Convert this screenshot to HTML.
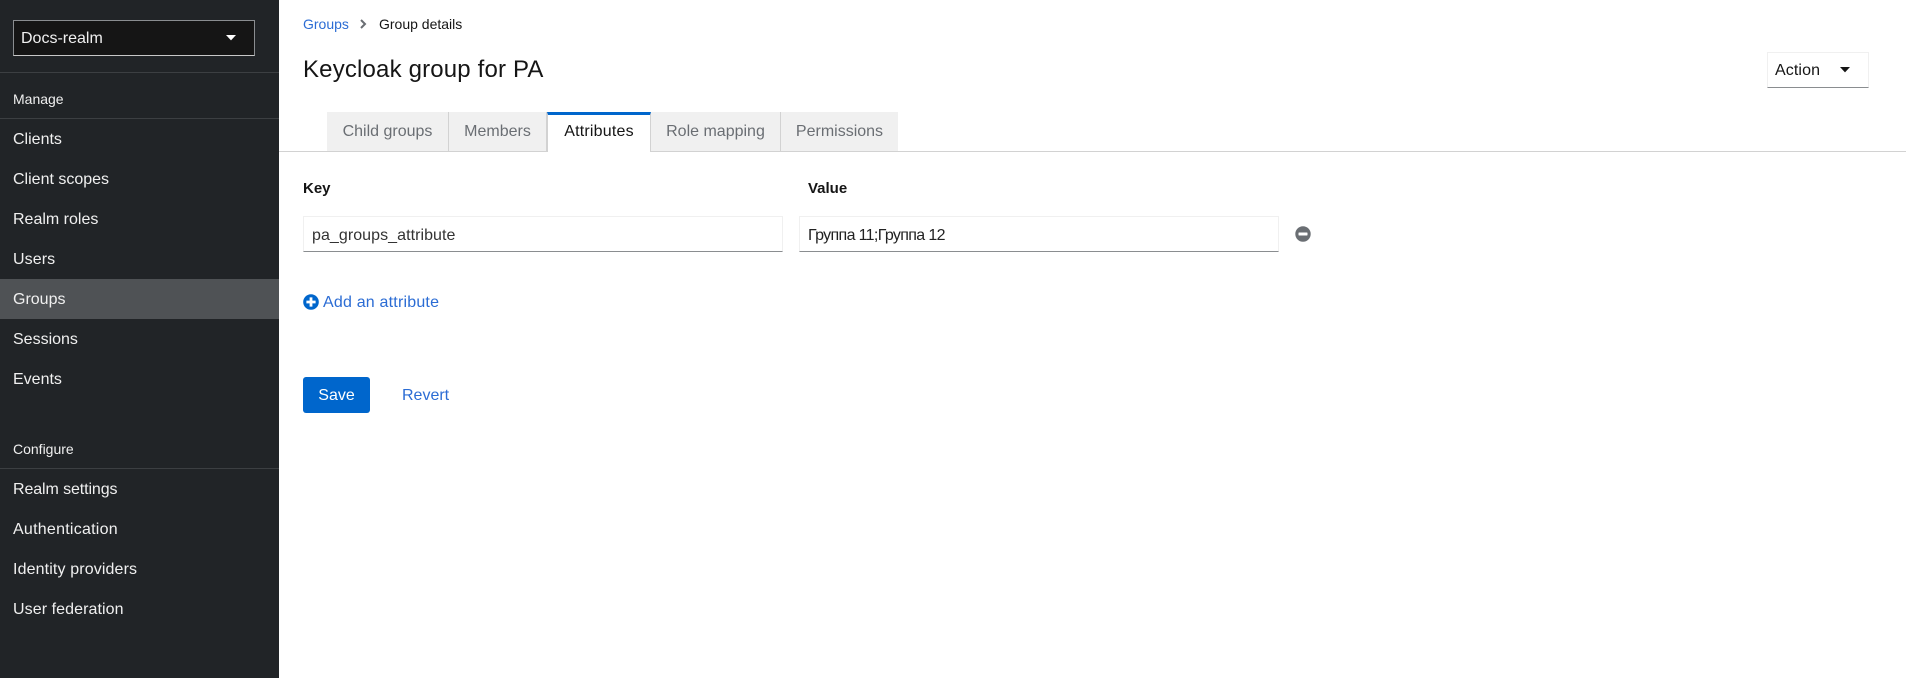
<!DOCTYPE html>
<html lang="en"><head><meta charset="utf-8"><title>Keycloak group for PA</title>
<style>
html,body{margin:0;padding:0;width:1906px;height:678px;overflow:hidden;background:#fff}
body{position:relative;font-family:"Liberation Sans","Noto Sans CJK SC",sans-serif;font-size:16px;color:#151515}
.a,.t{position:absolute;box-sizing:border-box}
.t{white-space:nowrap;line-height:24px;height:24px}
.nav{left:13px;color:#f0f0f0}
.line{position:absolute;left:0;width:279px;height:1px;background:#3c3f42}
.tab{position:absolute;top:112px;height:39px;background:#f0f0f0;color:#6a6e73;border-right:1px solid #d2d2d2;line-height:40px;text-align:center;white-space:nowrap;box-sizing:border-box}
.input{position:absolute;top:216px;height:36px;width:480px;box-sizing:border-box;border:1px solid #f0f0f0;border-bottom:1px solid #8a8d90;line-height:36px;padding-left:8px;white-space:nowrap}
</style></head><body>
<div class="a" style="left:0;top:0;width:279px;height:678px;background:#212427"></div>
<div class="a" style="left:13px;top:20px;width:242px;height:36px;background:#151515;border:1px solid #8a8d90;border-bottom-color:#c7c7c7"></div>
<div class="t" style="left:21px;top:26px;color:#f0f0f0;line-height:26px">Docs-realm</div>
<svg class="a" style="left:225px;top:34px" width="12" height="8" viewBox="0 0 12 8"><path d="M1 1h10L6 6.4z" fill="#fff"/></svg>
<div class="line" style="top:72px"></div>
<div class="t nav" style="top:87px;font-size:14px">Manage</div>
<div class="line" style="top:118px"></div>
<div class="a" style="left:0;top:279px;width:279px;height:40px;background:#4f5255"></div>
<div class="t nav" style="top:128px">Clients</div>
<div class="t nav" style="top:168px">Client scopes</div>
<div class="t nav" style="top:208px">Realm roles</div>
<div class="t nav" style="top:248px;letter-spacing:.1px">Users</div>
<div class="t nav" style="top:288px">Groups</div>
<div class="t nav" style="top:328px">Sessions</div>
<div class="t nav" style="top:368px">Events</div>
<div class="t nav" style="top:437px;font-size:14px">Configure</div>
<div class="line" style="top:468px"></div>
<div class="t nav" style="top:478px;letter-spacing:-.1px">Realm settings</div>
<div class="t nav" style="top:518px;letter-spacing:.25px">Authentication</div>
<div class="t nav" style="top:558px;letter-spacing:.13px">Identity providers</div>
<div class="t nav" style="top:598px;letter-spacing:.08px">User federation</div>

<div class="t" style="left:303px;top:12px;font-size:14px;color:#2b6cd4">Groups</div>
<svg class="a" style="left:359px;top:19px" width="8" height="10" viewBox="0 0 8 10"><path d="M2 1l4 4-4 4" fill="none" stroke="#6a6e73" stroke-width="2"/></svg>
<div class="t" style="left:379px;top:12px;font-size:14px">Group details</div>
<div class="t" style="left:303px;top:55px;font-size:24px;line-height:30px;height:30px;letter-spacing:.17px">Keycloak group for PA</div>

<div class="a" style="left:1767px;top:52px;width:102px;height:36px;border:1px solid #f0f0f0;border-bottom:1px solid #8a8d90"></div>
<div class="t" style="left:1775px;top:58px;line-height:26px;color:#151515;letter-spacing:.1px">Action</div>
<svg class="a" style="left:1839px;top:66px" width="12" height="8" viewBox="0 0 12 8"><path d="M1 1h10L6 6.4z" fill="#151515"/></svg>

<div class="a" style="left:279px;top:151px;width:1627px;height:1px;background:#d2d2d2"></div>
<div class="tab" style="left:327px;width:122px">Child groups</div>
<div class="tab" style="left:449px;width:98px">Members</div>
<div class="a" style="left:547px;top:112px;width:104px;height:40px;background:#fff;border-top:3px solid #06c;border-left:1px solid #d2d2d2;border-right:1px solid #d2d2d2"></div>
<div class="t" style="left:547px;width:104px;text-align:center;top:120px;letter-spacing:.2px">Attributes</div>
<div class="tab" style="left:651px;width:130px">Role mapping</div>
<div class="tab" style="left:781px;width:117px;border-right:0">Permissions</div>

<div class="t" style="left:303px;top:177px;font-weight:700;font-size:15px">Key</div>
<div class="t" style="left:808px;top:177px;font-weight:700;font-size:15px">Value</div>
<div class="input" style="left:303px;color:#333;line-height:37px;letter-spacing:.06px">pa_groups_attribute</div>
<div class="input" style="left:799px;color:#222;line-height:37px;letter-spacing:-.65px">Группа 11;Группа 12</div>
<svg class="a" style="left:1295px;top:226px" width="16" height="16" viewBox="0 0 16 16"><circle cx="8" cy="8" r="7.7" fill="#6a6e73"/><rect x="3.5" y="6.5" width="9" height="3" rx=".6" fill="#fff"/></svg>

<svg class="a" style="left:303px;top:294px" width="16" height="16" viewBox="0 0 16 16"><circle cx="8" cy="8" r="7.8" fill="#06c"/><path d="M8 3.4v9.2M3.4 8h9.2" stroke="#fff" stroke-width="2.8"/></svg>
<div class="t" style="left:323px;top:291px;color:#2b6cd4;letter-spacing:.2px">Add an attribute</div>

<div class="a" style="left:303px;top:377px;width:67px;height:36px;background:#06c;border-radius:3px;color:#fff;line-height:38px;text-align:center">Save</div>
<div class="t" style="left:402px;top:384px;color:#2b6cd4">Revert</div>
</body></html>
